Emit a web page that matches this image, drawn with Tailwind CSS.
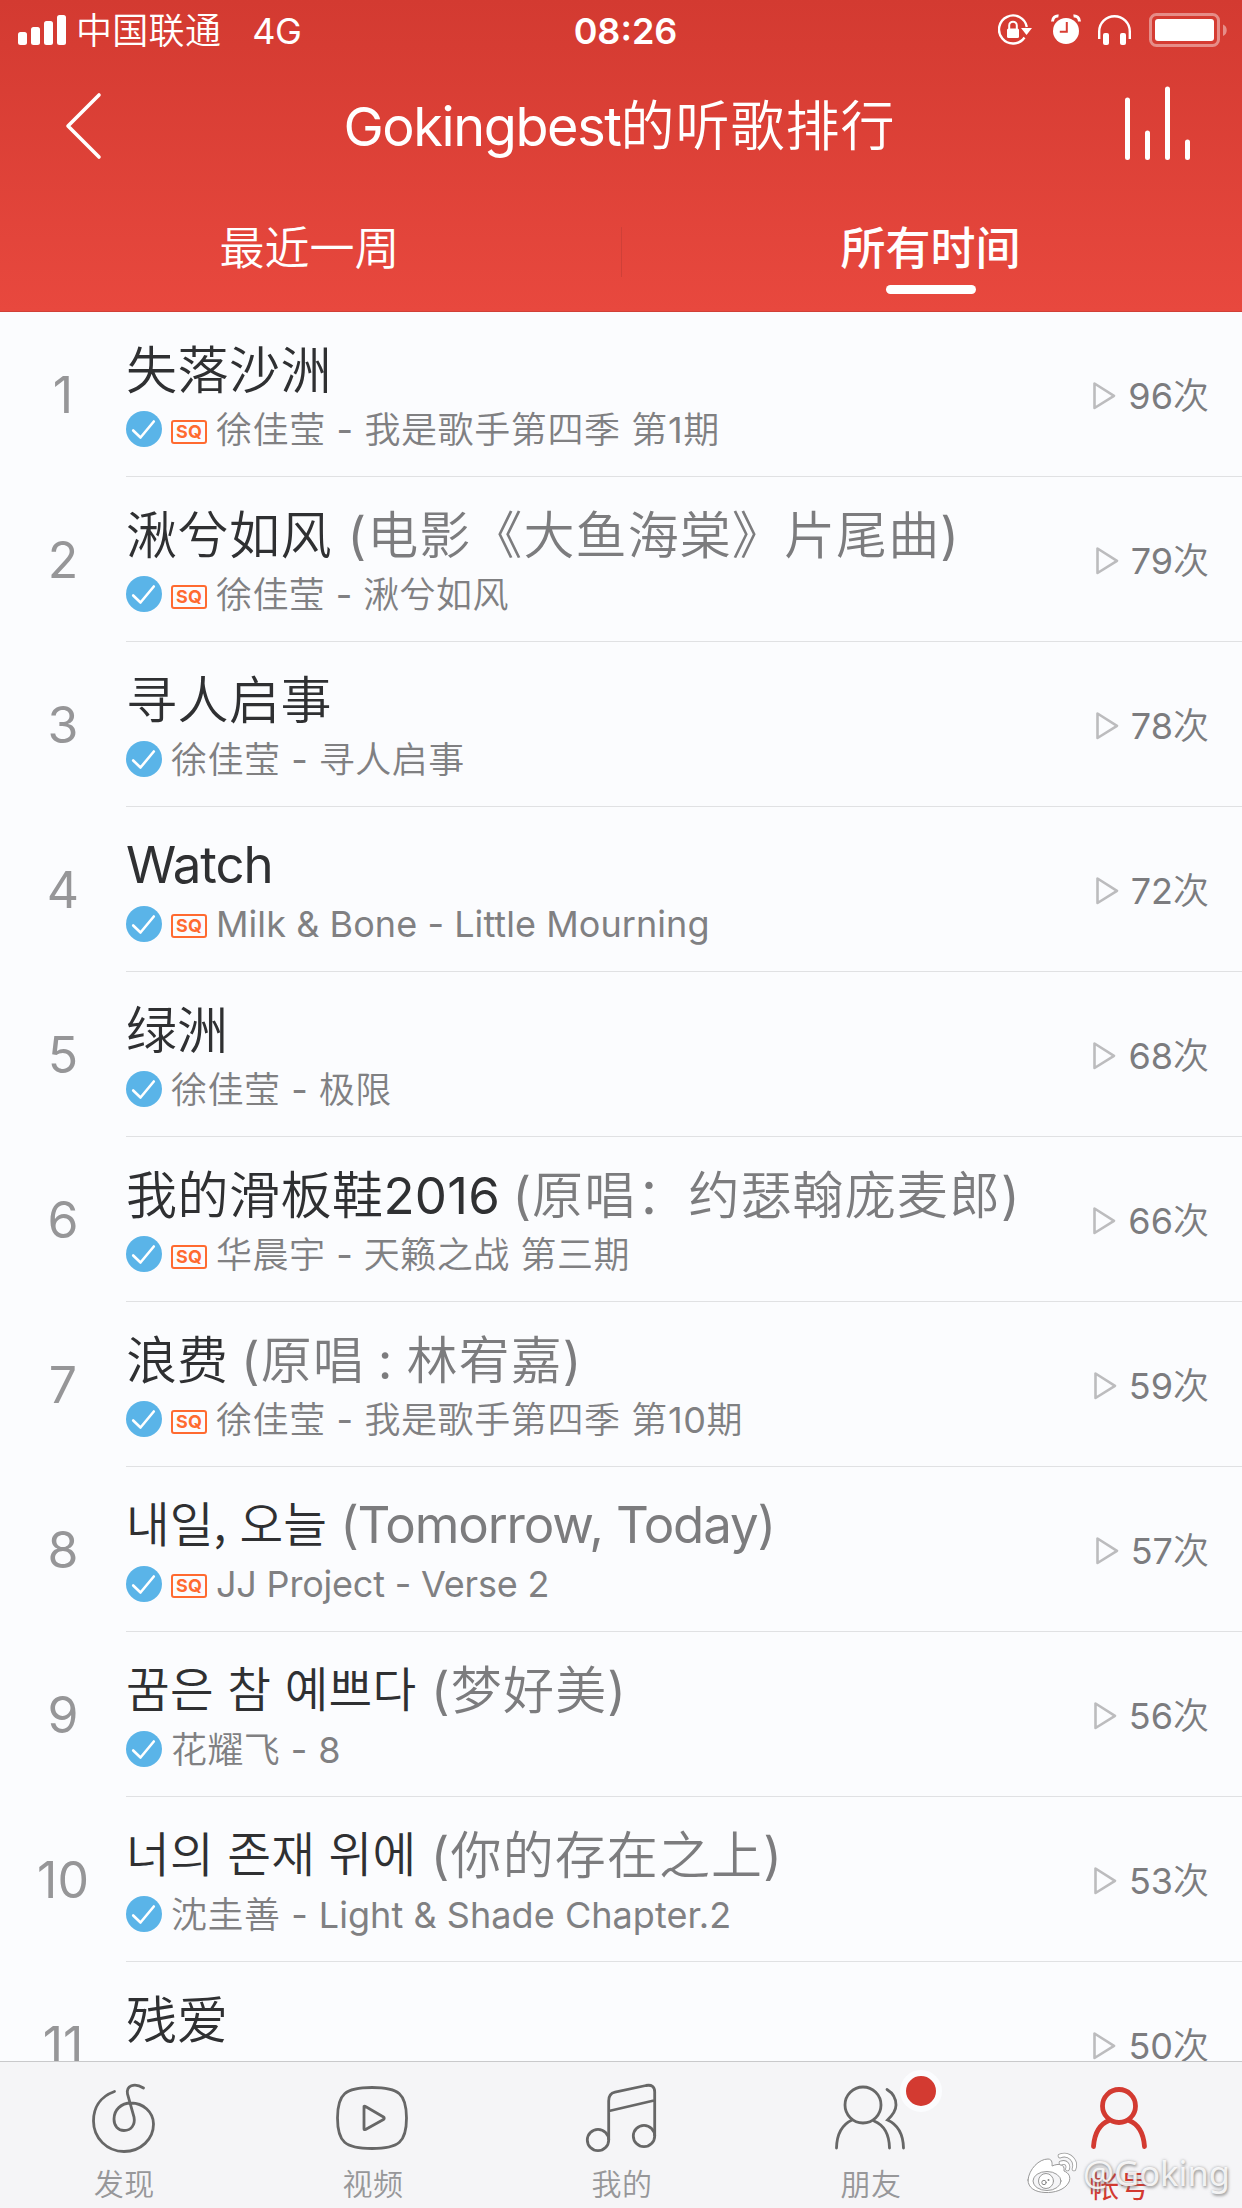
<!DOCTYPE html>
<html lang="zh-CN">
<head>
<meta charset="utf-8">
<title>听歌排行</title>
<script src="https://cdn.jsdelivr.net/npm/@tailwindcss/browser@4"></script>
</head>
<body class="bg-[#fbfcfe]">
<svg width="0" height="0" class="hidden">
  <symbol id="check" viewBox="0 0 36 36"><circle cx="18" cy="18" r="18" fill="#5ab4e8"/><path d="M7.2 19.5L14.5 26.5L27.8 10.5" fill="none" stroke="#fff" stroke-width="2.6" stroke-linecap="round" stroke-linejoin="round"/></symbol>
  <symbol id="play" viewBox="0 0 24 30"><path d="M2.5 2.5V27L22 14.8Z" fill="none" stroke="#bcbcbe" stroke-width="2.6" stroke-linejoin="round"/></symbol>
</svg>
<div class="relative flex h-[2208px] w-[1242px] flex-col overflow-hidden bg-[#fbfcfe] font-['Inter','Noto_Sans_CJK_SC_DemiLight','Noto_Sans_CJK_SC',sans-serif] font-normal">

  <header class="flex h-[312px] shrink-0 flex-col border-b border-[#d13f37] bg-linear-to-b from-[#d33a31] to-[#e8483e] text-white">
    <!-- status bar -->
    <div class="grid h-[62px] grid-cols-3 items-center text-[36px] leading-[62px]">
      <div class="flex items-center pl-[18px]">
        <svg class="-mt-[2px] mr-[10px] h-[30px] w-[48px]" viewBox="0 0 48 30" fill="#fff"><rect y="17" width="9" height="13" rx="2.5"/><rect x="13" y="12" width="9" height="18" rx="2.5"/><rect x="26" y="6" width="9" height="24" rx="2.5"/><rect x="39" width="9" height="30" rx="2.5"/></svg>
        <span class="whitespace-nowrap tracking-[0.3px]">中国联通</span>
        <span class="ml-[31px] tracking-[-0.5px]">4G</span>
      </div>
      <div class="-mt-px pl-[9px] text-center font-semibold">08:26</div>
      <div class="flex items-center justify-end pr-[14px]">
        <svg class="-mt-[2px] h-[34px] w-[230px]" viewBox="998 13 230 34" fill="none">
          <path d="M1026.8 27A14 14 0 1 0 1024.5 37.5" stroke="#fff" stroke-width="2.4"/>
          <path d="M1021 28h11l-5.500 7z" fill="#fff"/>
          <rect x="1007" y="28.500" width="12" height="9.500" rx="1.500" fill="#fff"/>
          <path d="M1009.200 29v-3.500a3.800 3.800 0 0 1 7.600 0V29" stroke="#fff" stroke-width="2"/>
          <circle cx="1066" cy="31" r="13" fill="#fff"/>
          <path d="M1066.800 22v9.800h-7" stroke="#d83c33" stroke-width="2"/>
          <path d="M1052.500 21.500c0-4 3-6 6-5.500M1079.500 21.500c0-4-3-6-6-5.500" stroke="#fff" stroke-width="3"/>
          <path d="M1099.200 39V31.500a15.300 15.300 0 0 1 30.600 0V39" stroke="#fff" stroke-width="2.400"/>
          <rect x="1103" y="33" width="6" height="12" rx="2" fill="#fff"/><rect x="1120" y="33" width="6" height="12" rx="2" fill="#fff"/>
          <rect x="1150.500" y="14.500" width="68" height="31" rx="6" stroke="#fff" stroke-opacity=".42" stroke-width="3"/>
          <rect x="1155" y="19" width="59" height="22" rx="3" fill="#fff"/>
          <path d="M1223 24.500v11.500c5-2 5-9.500 0-11.500z" fill="#fff" fill-opacity=".42"/>
        </svg>
      </div>
    </div>
    <!-- title bar -->
    <div class="flex h-[130px] items-center justify-between pl-[64px] pr-[52px]">
      <svg class="-mt-[2px] h-[68px] w-[40px]" viewBox="0 0 40 68" fill="none"><path d="M35 3L4 34L35 65" stroke="#fff" stroke-width="3.600" stroke-linecap="round" stroke-linejoin="round"/></svg>
      <h1 class="-mt-px ml-[11px] whitespace-nowrap text-[54px] tracking-[-1.400px]">Gokingbest<span class="tracking-[1px]">的听歌排行</span></h1>
      <svg class="-mt-[8px] h-[75px] w-[66px]" viewBox="0 0 66 75" stroke="#fff" stroke-width="5" stroke-linecap="round"><path d="M3.500 14V71.500M23.500 47V71.500M43.500 3V71.500M63.500 56V71.500"/></svg>
    </div>
    <!-- tabs -->
    <nav class="flex h-[119px] text-[45px] leading-[114px]">
      <div class="w-1/2 pr-[2px] text-center">最近一周</div>
      <div class="mt-[35px] h-[50px] w-px bg-[#cf4038]"></div>
      <div class="flex flex-1 flex-col items-center pr-[3px] font-['Noto_Sans_CJK_SC',sans-serif] font-medium"><span class="h-[93px] leading-[107px]">所有时间</span><i class="block h-[9px] w-[90px] rounded-full bg-white"></i></div>
    </nav>
  </header>

  <main class="h-[1749px] overflow-hidden text-[51px] text-[#2f3032]">
    <section class="flex h-[165px]">
      <div class="w-[126px] text-center text-[50px] leading-[166px] text-[#969698]">1</div>
      <div class="flex flex-1 justify-between border-b border-[#e0e1e3] pr-[33px]">
        <div class="pt-[27px] whitespace-nowrap"><h2 class="h-[64px] leading-[64px] tracking-[0.500px]">失落沙洲</h2>
          <p class="mt-[2px] flex h-[50px] items-center text-[36px] leading-[50px] text-[#808082]"><svg class="-mt-[2px] mr-[9px] size-[36px]"><use href="#check"/></svg><b class="mt-[3px] mr-[9px] h-[24px] w-[36px] rounded-[3px] border-2 border-[#ff6a30] text-center text-[18px] leading-[20px] font-bold text-[#ff6a30]">SQ</b><span class="tracking-[0.600px]">徐佳莹 - 我是歌手第四季 第1期</span></p></div>
        <div class="flex h-[168px] items-center gap-[12px] text-[36px] text-[#7c7c7f]"><svg class="h-[30px] w-[24px]"><use href="#play"/></svg>96次</div>
      </div>
    </section>
    <section class="flex h-[165px]">
      <div class="w-[126px] text-center text-[50px] leading-[166px] text-[#969698]">2</div>
      <div class="flex flex-1 justify-between border-b border-[#e0e1e3] pr-[33px]">
        <div class="pt-[27px] whitespace-nowrap"><h2 class="h-[64px] leading-[64px] tracking-[0.500px]">湫兮如风<span class="tracking-[1.100px] text-[#7c7c7e]"> (电影《大鱼海棠》片尾曲)</span></h2>
          <p class="mt-[2px] flex h-[50px] items-center text-[36px] leading-[50px] text-[#808082]"><svg class="-mt-[2px] mr-[9px] size-[36px]"><use href="#check"/></svg><b class="mt-[3px] mr-[9px] h-[24px] w-[36px] rounded-[3px] border-2 border-[#ff6a30] text-center text-[18px] leading-[20px] font-bold text-[#ff6a30]">SQ</b><span class="tracking-[0.400px]">徐佳莹 - 湫兮如风</span></p></div>
        <div class="flex h-[168px] items-center gap-[12px] text-[36px] text-[#7c7c7f]"><svg class="h-[30px] w-[24px]"><use href="#play"/></svg>79次</div>
      </div>
    </section>
    <section class="flex h-[165px]">
      <div class="w-[126px] text-center text-[50px] leading-[166px] text-[#969698]">3</div>
      <div class="flex flex-1 justify-between border-b border-[#e0e1e3] pr-[33px]">
        <div class="pt-[27px] whitespace-nowrap"><h2 class="h-[64px] leading-[64px] tracking-[0.500px]">寻人启事</h2>
          <p class="mt-[2px] flex h-[50px] items-center text-[36px] leading-[50px] text-[#808082]"><svg class="-mt-[2px] mr-[9px] size-[36px]"><use href="#check"/></svg><span class="tracking-[0.500px]">徐佳莹 - 寻人启事</span></p></div>
        <div class="flex h-[168px] items-center gap-[12px] text-[36px] text-[#7c7c7f]"><svg class="h-[30px] w-[24px]"><use href="#play"/></svg>78次</div>
      </div>
    </section>
    <section class="flex h-[165px]">
      <div class="w-[126px] text-center text-[50px] leading-[166px] text-[#969698]">4</div>
      <div class="flex flex-1 justify-between border-b border-[#e0e1e3] pr-[33px]">
        <div class="pt-[26px] whitespace-nowrap"><h2 class="h-[64px] leading-[64px] tracking-[-1px]">Watch</h2>
          <p class="mt-[2px] flex h-[50px] items-center text-[36px] leading-[50px] text-[#808082]"><svg class="mr-[9px] size-[36px]"><use href="#check"/></svg><b class="mt-[4px] mr-[9px] h-[24px] w-[36px] rounded-[3px] border-2 border-[#ff6a30] text-center text-[18px] leading-[20px] font-bold text-[#ff6a30]">SQ</b><span class="tracking-[0.060px]">Milk &amp; Bone - Little Mourning</span></p></div>
        <div class="flex h-[168px] items-center gap-[12px] text-[36px] text-[#7c7c7f]"><svg class="h-[30px] w-[24px]"><use href="#play"/></svg>72次</div>
      </div>
    </section>
    <section class="flex h-[165px]">
      <div class="w-[126px] text-center text-[50px] leading-[166px] text-[#969698]">5</div>
      <div class="flex flex-1 justify-between border-b border-[#e0e1e3] pr-[33px]">
        <div class="pt-[27px] whitespace-nowrap"><h2 class="h-[64px] leading-[64px]">绿洲</h2>
          <p class="mt-[2px] flex h-[50px] items-center text-[36px] leading-[50px] text-[#808082]"><svg class="-mt-[2px] mr-[9px] size-[36px]"><use href="#check"/></svg><span class="tracking-[0.500px]">徐佳莹 - 极限</span></p></div>
        <div class="flex h-[168px] items-center gap-[12px] text-[36px] text-[#7c7c7f]"><svg class="h-[30px] w-[24px]"><use href="#play"/></svg>68次</div>
      </div>
    </section>
    <section class="flex h-[165px]">
      <div class="w-[126px] text-center text-[50px] leading-[166px] text-[#969698]">6</div>
      <div class="flex flex-1 justify-between border-b border-[#e0e1e3] pr-[33px]">
        <div class="pt-[27px] whitespace-nowrap"><h2 class="h-[64px] leading-[64px] tracking-[0.500px]">我的滑板鞋<span class="tracking-[0.200px]">2016</span><span class="tracking-[1.100px] [word-spacing:-3px] text-[#7c7c7e]"> (原唱：约瑟翰庞麦郎)</span></h2>
          <p class="mt-[2px] flex h-[50px] items-center text-[36px] leading-[50px] text-[#808082]"><svg class="-mt-[2px] mr-[9px] size-[36px]"><use href="#check"/></svg><b class="mt-[3px] mr-[9px] h-[24px] w-[36px] rounded-[3px] border-2 border-[#ff6a30] text-center text-[18px] leading-[20px] font-bold text-[#ff6a30]">SQ</b><span class="tracking-[0.500px]">华晨宇 - 天籁之战 第三期</span></p></div>
        <div class="flex h-[168px] items-center gap-[12px] text-[36px] text-[#7c7c7f]"><svg class="h-[30px] w-[24px]"><use href="#play"/></svg>66次</div>
      </div>
    </section>
    <section class="flex h-[165px]">
      <div class="w-[126px] text-center text-[50px] leading-[166px] text-[#969698]">7</div>
      <div class="flex flex-1 justify-between border-b border-[#e0e1e3] pr-[33px]">
        <div class="pt-[27px] whitespace-nowrap"><h2 class="h-[64px] leading-[64px]">浪费<span class="tracking-[1.100px] [word-spacing:-2.500px] text-[#7c7c7e]"> (原唱 : 林宥嘉)</span></h2>
          <p class="mt-[2px] flex h-[50px] items-center text-[36px] leading-[50px] text-[#808082]"><svg class="-mt-[2px] mr-[9px] size-[36px]"><use href="#check"/></svg><b class="mt-[3px] mr-[9px] h-[24px] w-[36px] rounded-[3px] border-2 border-[#ff6a30] text-center text-[18px] leading-[20px] font-bold text-[#ff6a30]">SQ</b><span class="tracking-[0.600px]">徐佳莹 - 我是歌手第四季 第10期</span></p></div>
        <div class="flex h-[168px] items-center gap-[12px] text-[36px] text-[#7c7c7f]"><svg class="h-[30px] w-[24px]"><use href="#play"/></svg>59次</div>
      </div>
    </section>
    <section class="flex h-[165px]">
      <div class="w-[126px] text-center text-[50px] leading-[166px] text-[#969698]">8</div>
      <div class="flex flex-1 justify-between border-b border-[#e0e1e3] pr-[33px]">
        <div class="pt-[26px] whitespace-nowrap"><h2 class="h-[64px] leading-[64px]"><span class="relative -top-px font-['Noto_Sans_CJK_KR',sans-serif] text-[47.500px] leading-none font-[350]" lang="ko">내일, 오늘</span><span class="tracking-[-1.150px] text-[#7c7c7e]"> (Tomorrow, Today)</span></h2>
          <p class="mt-[2px] flex h-[50px] items-center text-[36px] leading-[50px] text-[#808082]"><svg class="mr-[9px] size-[36px]"><use href="#check"/></svg><b class="mt-[4px] mr-[9px] h-[24px] w-[36px] rounded-[3px] border-2 border-[#ff6a30] text-center text-[18px] leading-[20px] font-bold text-[#ff6a30]">SQ</b><span class="tracking-[-0.200px]">JJ Project - Verse 2</span></p></div>
        <div class="flex h-[168px] items-center gap-[12px] text-[36px] text-[#7c7c7f]"><svg class="h-[30px] w-[24px]"><use href="#play"/></svg>57次</div>
      </div>
    </section>
    <section class="flex h-[165px]">
      <div class="w-[126px] text-center text-[50px] leading-[166px] text-[#969698]">9</div>
      <div class="flex flex-1 justify-between border-b border-[#e0e1e3] pr-[33px]">
        <div class="pt-[27px] whitespace-nowrap"><h2 class="h-[64px] leading-[64px]"><span class="relative -top-[2px] font-['Noto_Sans_CJK_KR',sans-serif] text-[47.500px] leading-none font-[350] tracking-[0.200px]" lang="ko">꿈은 참 예쁘다</span><span class="tracking-[1.200px] [word-spacing:-1px] text-[#7c7c7e]"> (梦好美)</span></h2>
          <p class="mt-[2px] flex h-[50px] items-center text-[36px] leading-[50px] text-[#808082]"><svg class="-mt-[2px] mr-[9px] size-[36px]"><use href="#check"/></svg><span class="tracking-[0.400px]">花耀飞 - 8</span></p></div>
        <div class="flex h-[168px] items-center gap-[12px] text-[36px] text-[#7c7c7f]"><svg class="h-[30px] w-[24px]"><use href="#play"/></svg>56次</div>
      </div>
    </section>
    <section class="flex h-[165px]">
      <div class="w-[126px] text-center text-[50px] leading-[166px] text-[#969698]">10</div>
      <div class="flex flex-1 justify-between border-b border-[#e0e1e3] pr-[33px]">
        <div class="pt-[27px] whitespace-nowrap"><h2 class="h-[64px] leading-[64px]"><span class="relative -top-[2px] font-['Noto_Sans_CJK_KR',sans-serif] text-[47.500px] leading-none font-[350] tracking-[0.200px]" lang="ko">너의 존재 위에</span><span class="tracking-[1.100px] [word-spacing:-1px] text-[#7c7c7e]"> (你的存在之上)</span></h2>
          <p class="mt-[2px] flex h-[50px] items-center text-[36px] leading-[50px] text-[#808082]"><svg class="-mt-[2px] mr-[9px] size-[36px]"><use href="#check"/></svg><span class="tracking-[0.500px]">沈圭善 - <span class="tracking-[0.050px]">Light &amp; Shade Chapter.2</span></span></p></div>
        <div class="flex h-[168px] items-center gap-[12px] text-[36px] text-[#7c7c7f]"><svg class="h-[30px] w-[24px]"><use href="#play"/></svg>53次</div>
      </div>
    </section>
    <section class="flex h-[165px]">
      <div class="w-[126px] text-center text-[50px] leading-[166px] text-[#969698]">11</div>
      <div class="flex flex-1 justify-between pr-[33px]">
        <div class="pt-[27px]"><h2 class="h-[64px] leading-[64px]">残爱</h2></div>
        <div class="flex h-[168px] items-center gap-[12px] text-[36px] text-[#7c7c7f]"><svg class="h-[30px] w-[24px]"><use href="#play"/></svg>50次</div>
      </div>
    </section>
  </main>

  <!-- bottom navigation -->
  <footer class="grid h-[147px] grid-cols-5 border-t border-[#c9c9cb] bg-[#f5f5f7] text-center text-[30px] leading-[44px] text-[#979799]">
    <div class="flex flex-col items-center pt-[14px]">
      <svg class="h-[86px] w-[90px]" viewBox="79 2076 90 86" fill="none" stroke="#676767" stroke-width="2.800" stroke-linecap="round"><path d="M114.500 2091.500C99 2097 93.500 2109 93.500 2121C93.500 2138 107 2151.500 124 2151.500C141 2151.500 153.500 2139 153.500 2124C153.500 2112 143 2103 131 2103C121 2103 114 2110 114 2119C114 2126 118 2130.500 124 2130.500C131 2130.500 135.500 2125 134 2117L127.500 2094C126 2086 134 2082 143.500 2088"/></svg>
      <span class="tracking-[0.500px]">发现</span>
    </div>
    <div class="flex flex-col items-center pt-[14px]">
      <svg class="h-[86px] w-[90px]" viewBox="328 2076 90 86" fill="none" stroke="#676767" stroke-width="2.800" stroke-linejoin="round"><path d="M337.500 2118C337.500 2094 345 2087.500 372 2087.500S406.500 2094 406.500 2118S399 2148.500 372 2148.500S337.500 2142 337.500 2118Z"/><path d="M364 2106.500V2129Q364 2130 365.500 2129.500L383.500 2119.500Q385 2118 383.500 2117L365.500 2106.500Q364 2105.500 364 2107.500Z"/></svg>
      <span class="pl-px tracking-[0.500px]">视频</span>
    </div>
    <div class="flex flex-col items-center pt-[14px]">
      <svg class="h-[86px] w-[90px]" viewBox="576 2076 90 86" fill="none" stroke="#676767" stroke-width="2.800"><circle cx="598" cy="2140" r="10.700"/><circle cx="644" cy="2136" r="10.700"/><path d="M608.700 2140V2101Q608.700 2093.500 615 2092.200L646 2085.500Q654.700 2084 654.700 2092V2136M609 2111L654 2100.500"/></svg>
      <span class="pl-[2px] tracking-[0.500px]">我的</span>
    </div>
    <div class="relative flex flex-col items-center pt-[14px]">
      <svg class="h-[86px] w-[90px]" viewBox="824 2076 90 86" fill="none" stroke="#676767" stroke-width="2.800" stroke-linecap="round"><circle cx="863" cy="2105" r="18"/><path d="M836.500 2148Q837 2127 852 2120M874 2121Q889 2127 889.500 2148M887 2089.500Q896 2095 896 2105Q896 2112 887.500 2120Q903 2127 903.500 2148"/></svg>
      <span class="pl-[3px] tracking-[0.500px]">朋友</span>
      <i class="absolute top-[8px] left-[155px] size-[42px] rounded-full border-6 border-[#fbfcfe] bg-[#d33a31]"></i>
    </div>
    <div class="relative flex flex-col items-center pt-[14px] text-[#d33a31]">
      <svg class="h-[86px] w-[90px]" viewBox="1073 2076 90 86" fill="none" stroke="#d33a31" stroke-width="4.800" stroke-linecap="round"><circle cx="1119" cy="2106" r="16.500"/><path d="M1093.500 2146.500Q1095 2126 1109 2120.500M1129 2120.500Q1143 2126 1144.500 2146.500"/></svg>
      <span class="pl-[4px] font-['Noto_Sans_CJK_SC',sans-serif] tracking-[0.500px]">帐号</span>
      <!-- author watermark -->
      <div class="absolute top-[89px] right-[12px] flex items-center gap-[5px] font-['Noto_Sans',sans-serif] text-[34.500px] text-white/85 [text-shadow:0_0_3px_#77777799,1px_2px_3px_#77777799]">
        <svg class="h-[44px] w-[52px]" viewBox="1027 2152 52 44" fill="none" stroke-linecap="round"><path d="M1029 2181C1030 2170 1040 2160 1049 2160C1054 2160 1053 2166 1053 2167C1060 2164 1066 2165 1065 2172C1070 2174 1072 2178 1070 2183C1066 2191 1055 2194 1046 2193.500C1036 2193 1029 2189 1029 2181Z" fill="#fff" stroke="#999" stroke-width="1"/><ellipse cx="1048" cy="2182" rx="14" ry="9.500" fill="#f5f5f7" stroke="#999"/><circle cx="1047" cy="2182" r="7.500" fill="#fff" stroke="#999"/><circle cx="1045" cy="2183.500" r="2.200" stroke="#888"/><circle cx="1049.500" cy="2181" r="1" fill="#888"/><path d="M1061 2157C1070 2153.500 1078 2162 1075 2170M1062 2164C1067 2162 1070 2166 1068.500 2170" stroke="#999" stroke-width="4.600"/><path d="M1061 2157C1070 2153.500 1078 2162 1075 2170M1062 2164C1067 2162 1070 2166 1068.500 2170" stroke="#fff" stroke-width="3"/></svg>
        <span>@Goking</span>
      </div>
    </div>
  </footer>
</div>
</body>
</html>
